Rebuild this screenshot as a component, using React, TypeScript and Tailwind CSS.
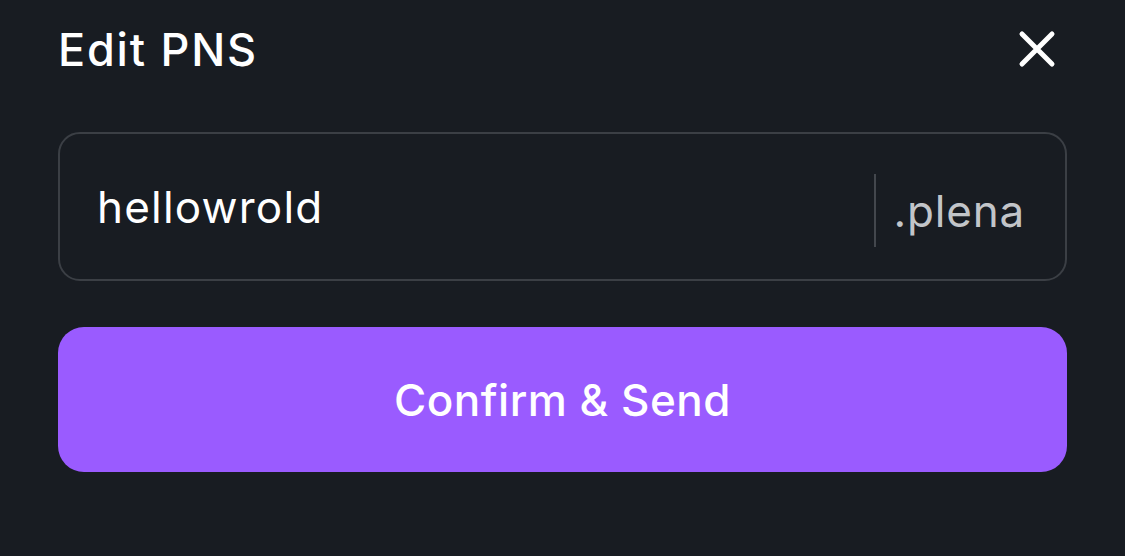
import React from 'react';

export default function App() {
  return (
    <div
      className="w-[1125px] h-[556px] bg-[#181c22] text-white px-[58px] pt-[24px]"
      style={{ fontFamily: 'Inter, "Noto Sans", sans-serif' }}
    >
      <div className="flex items-center justify-between h-[50px]">
        <h1 className="text-[45px] font-medium tracking-[1.8px] leading-none">Edit PNS</h1>
        <button className="w-[40px] h-[40px] flex items-center justify-center mr-[10px]">
          <svg width="38" height="38" viewBox="0 0 38 38" fill="none">
            <path d="M4 4L34 34M34 4L4 34" stroke="white" strokeWidth="5" strokeLinecap="round" />
          </svg>
        </button>
      </div>
      <div className="mt-[58px] h-[149px] rounded-[22px] border-2 border-[#3b3f45] flex items-center pl-[37px] pr-[40px]">
        <span className="flex-1 text-[44px] tracking-[1.2px] leading-none">hellowrold</span>
        <div className="w-[2px] h-[73px] bg-[#43474d] mr-[18px] mt-[8px]" />
        <span className="text-[44px] tracking-[0.8px] leading-none text-[#c2c5c9] mt-[8px]">.plena</span>
      </div>
      <button className="mt-[46px] w-full h-[145px] rounded-[26px] bg-[#9a5bff] flex items-center justify-center text-[44px] tracking-[0.5px] font-medium">
        Confirm &amp; Send
      </button>
    </div>
  );
}
